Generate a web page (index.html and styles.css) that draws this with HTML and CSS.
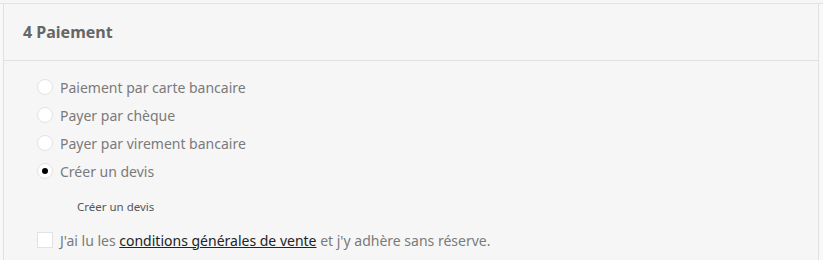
FILE: index.html
```html
<!DOCTYPE html>
<html lang="fr">
<head>
<meta charset="utf-8">
<title>Paiement</title>
<link rel="stylesheet" href="styles.css">
</head>
<body>
<div class="frame">
  <section class="step">
    <h1 class="step-title">4 Paiement</h1>
    <div class="step-body">
      <ul class="options">
        <li class="option"><span class="radio"></span><span>Paiement par carte bancaire</span></li>
        <li class="option"><span class="radio"></span><span>Payer par chèque</span></li>
        <li class="option"><span class="radio"></span><span>Payer par virement bancaire</span></li>
        <li class="option"><span class="radio checked"></span><span>Créer un devis</span></li>
      </ul>
      <p class="info">Créer un devis</p>
      <div class="terms"><span class="checkbox"></span><span>J'ai lu les <a href="#" class="link">conditions générales de vente</a> et j'y adhère sans réserve.</span></div>
    </div>
  </section>
</div>
</body>
</html>
```
FILE: styles.css
```css
html, body {
  margin: 0;
  padding: 0;
  background: #f6f6f6;
}
body {
  font-family: "Noto Sans", "DejaVu Sans", sans-serif;
  color: #7a7a7a;
  height: 260px;
  overflow: hidden;
}
.frame {
  margin-top: 3px;
  border-top: 1px solid #e3e3e3;
  padding-right: 4px;
  background: #f8f8f8;
}
.step {
  margin-left: 3px;
  border-left: 1px solid #e1e1e1;
  border-right: 1px solid #e1e1e1;
  background: #f6f6f6;
  height: 260px;
}
.step-title {
  margin: 0;
  height: 57px;
  box-sizing: border-box;
  padding: 18px 0 0 19px;
  font-size: 16px;
  font-weight: 700;
  color: #666;
  line-height: 20px;
  border-bottom: 1px solid #e1e1e1;
}
.step-body {
  padding: 12px 0 0 33px;
}
.options {
  list-style: none;
  margin: 0;
  padding: 0;
}
.option {
  display: flex;
  align-items: center;
  gap: 7px;
  height: 28px;
  font-size: 14px;
}
.radio {
  width: 16px;
  height: 16px;
  box-sizing: border-box;
  border-radius: 50%;
  border: 1px solid #e2e2e2;
  background: #fff;
  display: flex;
  align-items: center;
  justify-content: center;
}
.radio.checked::after {
  content: "";
  width: 6px;
  height: 6px;
  border-radius: 50%;
  background: #000;
}
.info {
  margin: 0;
  padding: 13px 0 0 40px;
  height: 20px;
  line-height: 18px;
  font-size: 11.5px;
  color: #555;
}
.terms {
  display: flex;
  align-items: center;
  gap: 7px;
  margin-top: 8px;
  height: 28px;
  font-size: 14px;
}
.checkbox {
  width: 16px;
  height: 16px;
  box-sizing: border-box;
  border: 1px solid #e2e2e2;
  background: #fff;
}
.link {
  color: #232323;
  text-decoration: underline;
}
```
